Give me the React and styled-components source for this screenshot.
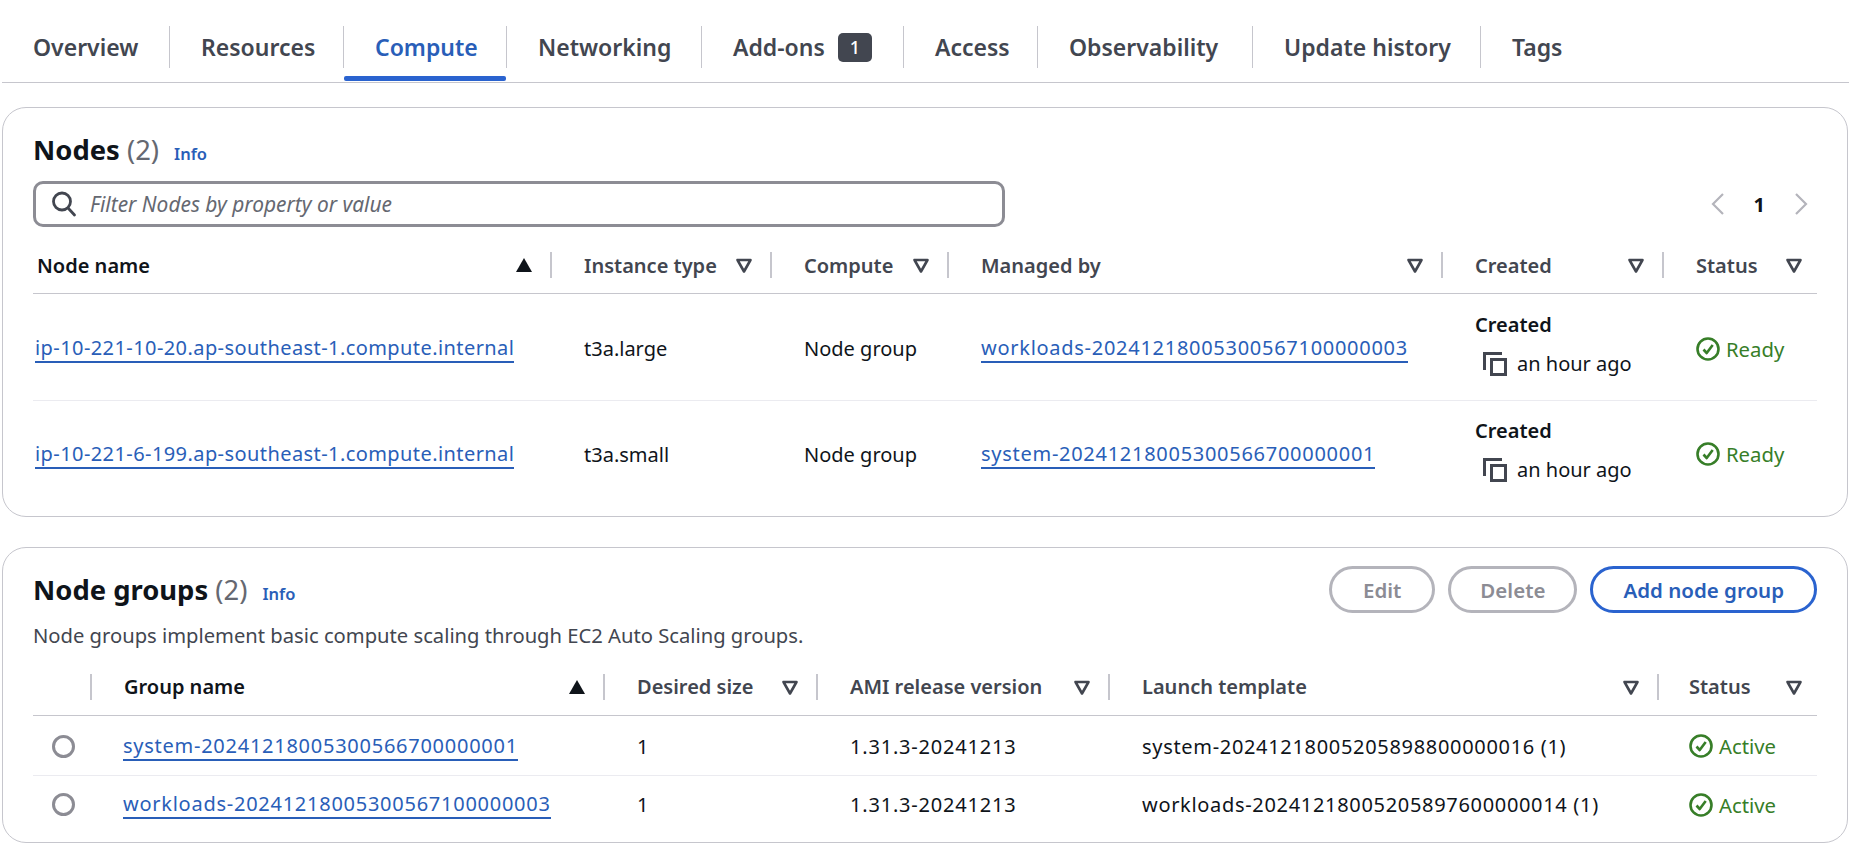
import React from "react";
import styled, { createGlobalStyle } from "styled-components";

const Global = createGlobalStyle`
  html, body { margin: 0; padding: 0; background: #fff; }
  body { font-family: "Noto Sans", "Open Sans", sans-serif; color: #000716; font-size: 20px; }
  * { box-sizing: border-box; }
`;

const Page = styled.div`
  width: 1865px;
  height: 862px;
  overflow: hidden;
  padding-top: 26px;
`;
const TabBar = styled.div`
  display: flex;
  height: 57px;
  border-bottom: 1px solid #c6c6cd;
  margin-left: 2px;
  margin-right: 16px;
`;
const Tab = styled.div`
  position: relative;
  width: ${p => p.$w}px;
  height: 42px;
  display: flex;
  align-items: center;
  gap: 13px;
  padding-left: 31px;
  white-space: nowrap;
  font-size: 23px;
  font-weight: 600;
  color: ${p => (p.$active ? "#295eb8" : "#424650")};
  border-right: ${p => (p.$last ? "none" : "1px solid #c6c6cd")};
  ${p => p.$active && `
    &::after {
      content: "";
      position: absolute;
      left: 0; right: 0; top: 50px;
      height: 5px;
      border-radius: 2px;
      background: #2a63cf;
    }
  `}
`;
const Count = styled.span`
  display: inline-flex;
  align-items: center;
  justify-content: center;
  width: 34px;
  height: 29px;
  border-radius: 5px;
  background: #424650;
  color: #fff;
  font-size: 18px;
  font-weight: 500;
`;
const Panel = styled.section`
  margin: ${p => p.$top}px 17px 0 2px;
  height: ${p => p.$height}px;
  border: 1px solid #c6c6cd;
  border-radius: 24px;
  padding: 0 30px;
`;
const PanelHead = styled.div`
  display: flex;
  align-items: flex-start;
  justify-content: space-between;
  padding-top: ${p => p.$pad}px;
`;
const HeadBlock = styled.div`
  padding-top: ${p => p.$pad}px;
`;
const TitleRow = styled.div`
  display: flex;
  align-items: baseline;
`;
const Title = styled.h2`
  margin: 0;
  font-size: 27.4px;
  line-height: 38px;
  font-weight: 700;
  color: #0f141a;
`;
const Counter = styled.span`
  font-weight: 400;
  color: #656871;
`;
const Info = styled.span`
  margin-left: 15px;
  font-size: 16.5px;
  font-weight: 600;
  color: #295eb8;
`;
const Desc = styled.p`
  margin: 13px 0 0;
  font-size: 20.2px;
  line-height: 26px;
  color: #424650;
`;
const FilterRow = styled.div`
  display: flex;
  align-items: center;
  justify-content: space-between;
  margin-top: 12px;
`;
const Search = styled.div`
  width: 972px;
  height: 46px;
  border: 3px solid #8c8c94;
  border-radius: 10px;
  display: flex;
  align-items: center;
  padding-left: 15px;
  gap: 13px;
`;
const Placeholder = styled.span`
  font-style: italic;
  font-size: 20.9px;
  color: #656871;
`;
const Pager = styled.div`
  display: flex;
  align-items: center;
  gap: 28px;
  padding-right: 8px;
  font-size: 20px;
  font-weight: 700;
  color: #0f141a;
`;
const Actions = styled.div`
  display: flex;
  gap: 13px;
`;
const Button = styled.div`
  height: 47px;
  border-radius: 24px;
  border: 3px solid ${p => (p.$primary ? "#2a63cf" : "#b4b4bb")};
  color: ${p => (p.$primary ? "#295eb8" : "#8c8c94")};
  padding: 0 ${p => p.$pad}px;
  display: flex;
  align-items: center;
  font-size: 20.5px;
  font-weight: 600;
`;
const Row = styled.div`
  display: grid;
  grid-template-columns: ${p => p.$cols};
  align-items: center;
  height: ${p => p.$h}px;
  padding-top: ${p => p.$pt ?? 0}px;
  border-bottom: ${p => (p.$noLine ? "none" : `1px solid ${p.$head ? "#c6c6cd" : "#ebebf0"}`)};
`;
const Head = styled.div`
  height: 26px;
  display: flex;
  align-items: center;
  justify-content: space-between;
  padding: 0 ${p => (p.$last ? 13 : 17)}px 0 ${p => p.$pl ?? 32}px;
  font-size: 20px;
  font-weight: 600;
  color: ${p => (p.$sorted ? "#0f141a" : "#424650")};
  border-right: ${p => (p.$last ? "none" : "2px solid #c6c6cd")};
`;
const Cell = styled.div`
  padding-left: ${p => p.$pl ?? 32}px;
  font-size: 20px;
  letter-spacing: ${p => p.$ls ?? 0}px;
  color: #0f141a;
  white-space: nowrap;
`;
const Link = styled.span`
  color: #295eb8;
  border-bottom: 2px solid #295eb8;
  line-height: 26px;
  display: inline-block;
`;
const Created = styled.div`
  display: flex;
  flex-direction: column;
  gap: 13px;
  padding-bottom: 8px;
`;
const CreatedLabel = styled.div`
  font-weight: 600;
  line-height: 26px;
`;
const CreatedValue = styled.div`
  display: flex;
  align-items: center;
  gap: 10px;
  padding-left: 8px;
  line-height: 26px;
`;
const Status = styled.div`
  display: flex;
  align-items: center;
  gap: 6px;
  font-size: 20.3px;
  color: #377e28;
`;
const Radio = styled.div`
  width: 23px;
  height: 23px;
  border-radius: 50%;
  border: 3px solid #8c8c94;
  margin-left: 19px;
`;

const CaretDown = () => (
  <svg width="18" height="18" viewBox="0 0 18 18" fill="none">
    <path d="M2.5 4h13L9 15.5z" stroke="#424650" strokeWidth="2.6" strokeLinejoin="round" />
  </svg>
);
const CaretUp = () => (
  <svg width="18" height="18" viewBox="0 0 18 18">
    <path d="M1 16 9 2l8 14z" fill="#0f141a" />
  </svg>
);
const SearchIcon = () => (
  <svg width="26" height="26" viewBox="0 0 26 26" fill="none" stroke="#424650" strokeWidth="2.8" strokeLinecap="round">
    <circle cx="11" cy="10.5" r="8.5" />
    <path d="M17.5 17.5l6 6.5" />
  </svg>
);
const CopyIcon = () => (
  <svg width="24" height="24" viewBox="0 0 24 24" fill="none" stroke="#424650" strokeWidth="3">
    <path d="M1.5 18V1.5H19" />
    <rect x="8.5" y="7.5" width="14" height="15" />
  </svg>
);
const OkIcon = () => (
  <svg width="24" height="24" viewBox="0 0 24 24" fill="none" stroke="#377e28" strokeWidth="2.6">
    <circle cx="12" cy="12" r="10.5" />
    <path d="M7.5 12.5l3.2 3.5 6-8" strokeLinejoin="round" />
  </svg>
);
const Chevron = ({ left }) => (
  <svg width="16" height="24" viewBox="0 0 16 24" fill="none" stroke="#b4b4bb" strokeWidth="2.2">
    <path d={left ? "M13 2 3 12l10 10" : "M3 2l10 10L3 22"} />
  </svg>
);

const nodeCols = "519px 220px 177px 494px 221px 152px";
const groupCols = "59px 513px 213px 292px 549px 157px";

const nodeHead = ["Node name", "Instance type", "Compute", "Managed by", "Created", "Status"];
const nodes = [
  ["ip-10-221-10-20.ap-southeast-1.compute.internal", "t3a.large", "Node group", "workloads-20241218005300567100000003"],
  ["ip-10-221-6-199.ap-southeast-1.compute.internal", "t3a.small", "Node group", "system-20241218005300566700000001"],
];
const groupHead = ["Group name", "Desired size", "AMI release version", "Launch template", "Status"];
const groups = [
  ["system-20241218005300566700000001", "1", "1.31.3-20241213", "system-20241218005205898800000016 (1)"],
  ["workloads-20241218005300567100000003", "1", "1.31.3-20241213", "workloads-20241218005205897600000014 (1)"],
];

export default function App() {
  return (
    <Page>
      <Global />
      <TabBar>
        <Tab $w={168}>Overview</Tab>
        <Tab $w={174}>Resources</Tab>
        <Tab $w={163} $active>Compute</Tab>
        <Tab $w={195}>Networking</Tab>
        <Tab $w={202}>Add-ons <Count>1</Count></Tab>
        <Tab $w={134}>Access</Tab>
        <Tab $w={215}>Observability</Tab>
        <Tab $w={228}>Update history</Tab>
        <Tab $w={120} $last>Tags</Tab>
      </TabBar>

      <Panel $top={24} $height={410}>
        <PanelHead $pad={23}>
          <TitleRow>
            <Title>Nodes <Counter>(2)</Counter></Title>
            <Info>Info</Info>
          </TitleRow>
        </PanelHead>
        <FilterRow>
          <Search>
            <SearchIcon />
            <Placeholder>Filter Nodes by property or value</Placeholder>
          </Search>
          <Pager>
            <Chevron left />
            <span>1</span>
            <Chevron />
          </Pager>
        </FilterRow>
        <Row $cols={nodeCols} $h={67} $pt={10} $head>
          {nodeHead.map((h, i) => (
            <Head key={h} $sorted={i === 0} $pl={i === 0 ? 4 : 32} $last={i === 5}>
              <span>{h}</span>
              {i === 0 ? <CaretUp /> : <CaretDown />}
            </Head>
          ))}
        </Row>
        {nodes.map((n, r) => (
          <Row key={n[0]} $cols={nodeCols} $h={r === 0 ? 107 : 104} $pt={r === 0 ? 3 : 2} $noLine={r === 1}>
            <Cell $pl={2} $ls={0.42}><Link>{n[0]}</Link></Cell>
            <Cell>{n[1]}</Cell>
            <Cell>{n[2]}</Cell>
            <Cell $ls={0.72}><Link>{n[3]}</Link></Cell>
            <Cell>
              <Created>
                <CreatedLabel>Created</CreatedLabel>
                <CreatedValue><CopyIcon /> an hour ago</CreatedValue>
              </Created>
            </Cell>
            <Cell>
              <Status><OkIcon /> Ready</Status>
            </Cell>
          </Row>
        ))}
      </Panel>

      <Panel $top={30} $height={296}>
        <PanelHead $pad={18}>
          <HeadBlock $pad={5}>
            <TitleRow>
              <Title>Node groups <Counter>(2)</Counter></Title>
              <Info>Info</Info>
            </TitleRow>
            <Desc>Node groups implement basic compute scaling through EC2 Auto Scaling groups.</Desc>
          </HeadBlock>
          <Actions>
            <Button $pad={31}>Edit</Button>
            <Button $pad={29}>Delete</Button>
            <Button $primary $pad={30}>Add node group</Button>
          </Actions>
        </PanelHead>
        <Row $cols={groupCols} $h={68} $pt={10} $head>
          <Head />
          {groupHead.map((h, i) => (
            <Head key={h} $sorted={i === 0} $last={i === 4} $pl={i === 4 ? 30 : 32}>
              <span>{h}</span>
              {i === 0 ? <CaretUp /> : <CaretDown />}
            </Head>
          ))}
        </Row>
        {groups.map((g, r) => (
          <Row key={g[0]} $cols={groupCols} $h={r === 0 ? 60 : 57} $pt={r === 0 ? 1 : 0} $noLine={r === 1}>
            <Cell $pl={0}><Radio /></Cell>
            <Cell $pl={31} $ls={0.74}><Link>{g[0]}</Link></Cell>
            <Cell>{g[1]}</Cell>
            <Cell $ls={0.8}>{g[2]}</Cell>
            <Cell $ls={0.68}>{g[3]}</Cell>
            <Cell $pl={30}>
              <Status><OkIcon /> Active</Status>
            </Cell>
          </Row>
        ))}
      </Panel>
    </Page>
  );
}
